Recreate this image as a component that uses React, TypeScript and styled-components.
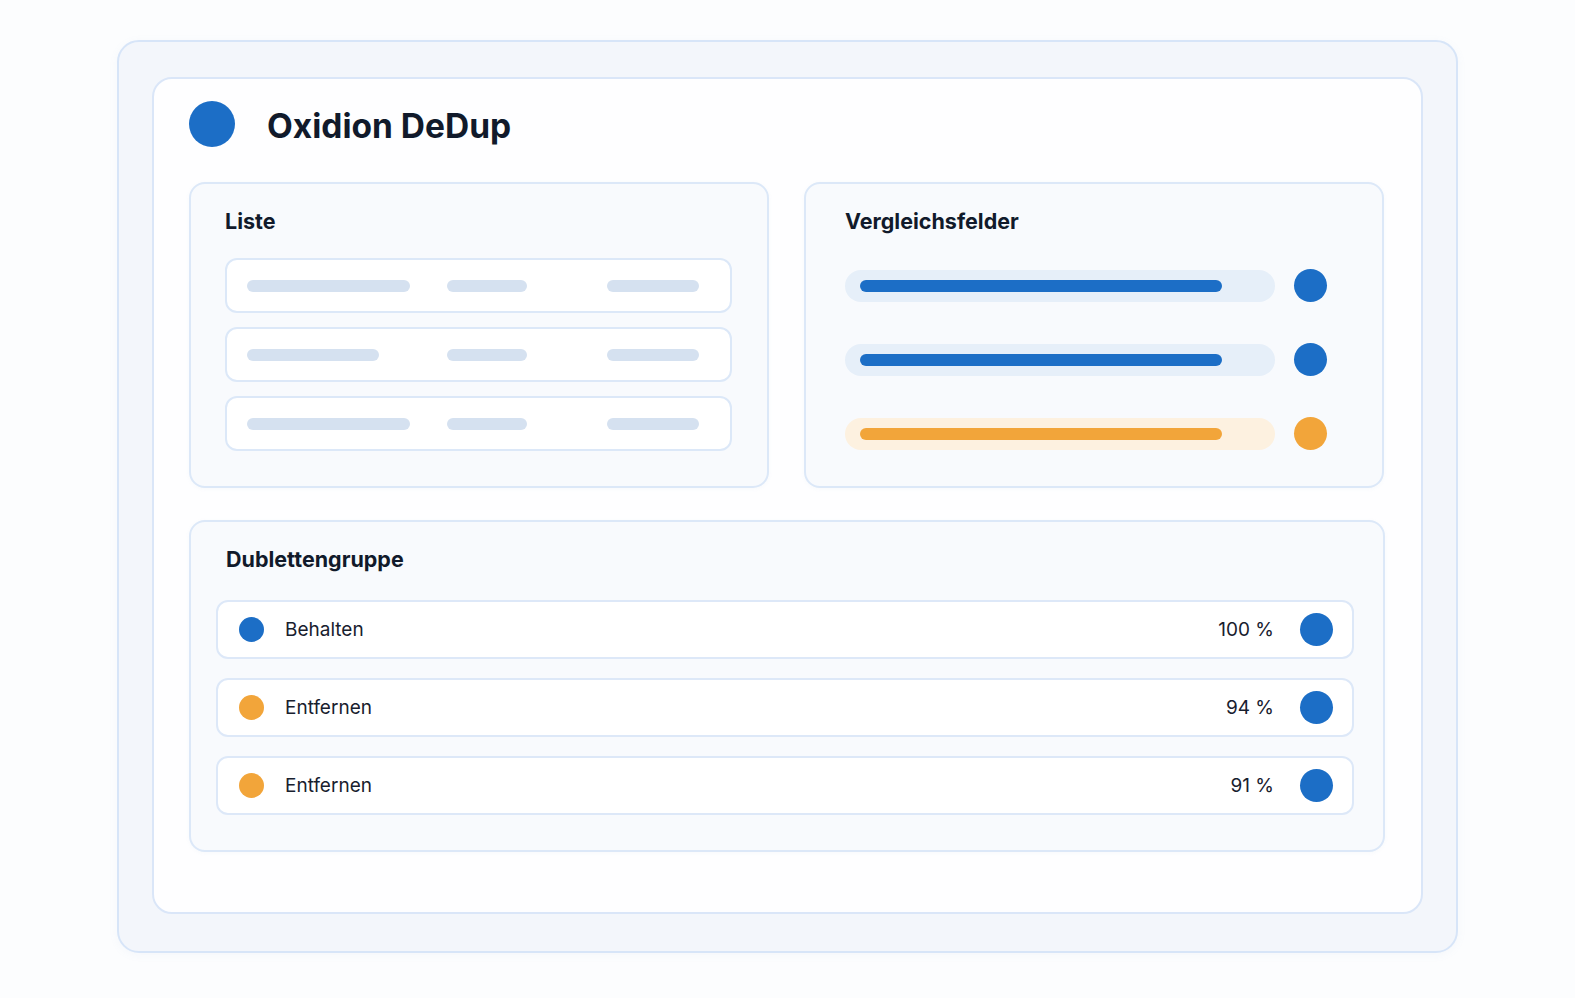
import styled, { createGlobalStyle } from "styled-components";

const BLUE = "#1c6ec6";
const ORANGE = "#f2a53a";

const GlobalStyle = createGlobalStyle`
  html, body {
    margin: 0;
    padding: 0;
    background: #fcfdfe;
    font-family: Inter, "Noto Sans", "Liberation Sans", sans-serif;
    color: #121a2a;
  }
  * {
    box-sizing: border-box;
  }
`;

const Page = styled.div`
  width: 1575px;
  height: 998px;
  padding-top: 40px;
  display: flex;
  justify-content: center;
  align-items: flex-start;
`;

const Frame = styled.div`
  width: 1341px;
  height: 913px;
  padding: 35px 33px 0 33px;
  background: #f3f6fb;
  border: 2px solid #d7e5f8;
  border-radius: 22px;
  box-shadow: 0 2px 10px rgba(120, 150, 200, 0.06);
`;

const Window = styled.div`
  width: 1271px;
  height: 837px;
  padding: 22px 36px 0 35px;
  background: #fefeff;
  border: 2px solid #dae6f8;
  border-radius: 20px;
`;

const Header = styled.div`
  display: flex;
  align-items: center;
  gap: 32px;
  height: 46px;
`;

const Dot = styled.span<{ $size: number; $color: string }>`
  display: block;
  flex: none;
  width: ${(p) => p.$size}px;
  height: ${(p) => p.$size}px;
  border-radius: 50%;
  background: ${(p) => p.$color};
`;

const Title = styled.h1`
  margin: 0;
  font-size: 33.5px;
  font-weight: 700;
  color: #111a2b;
  transform: translateY(2px);
`;

const TopGrid = styled.div`
  display: grid;
  grid-template-columns: 580px 580px;
  gap: 35px;
  margin-top: 35px;
`;

const Panel = styled.section<{ $pad: number; $height: number }>`
  height: ${(p) => p.$height}px;
  padding: 24px 0 0 ${(p) => p.$pad}px;
  background: #f8fafd;
  border: 2px solid #dce8f8;
  border-radius: 16px;
  box-shadow: 0 1px 4px rgba(120, 150, 200, 0.05);
`;

const PanelTitle = styled.h2`
  margin: 0;
  font-size: 21.5px;
  line-height: 26px;
  font-weight: 700;
  color: #111a2b;
`;

const ListRows = styled.div`
  display: flex;
  flex-direction: column;
  gap: 14px;
  margin-top: 24px;
  width: 507px;
`;

const ListRow = styled.div`
  display: grid;
  grid-template-columns: 200px 160px 92px;
  align-items: center;
  height: 55px;
  padding-left: 20px;
  background: #fff;
  border: 2px solid #dce8f8;
  border-radius: 12px;
`;

const Placeholder = styled.span<{ $w: number }>`
  display: block;
  width: ${(p) => p.$w}px;
  height: 12px;
  border-radius: 6px;
  background: #d5e1f0;
`;

const Fields = styled.div`
  display: flex;
  flex-direction: column;
  gap: 41px;
  margin-top: 35px;
`;

const FieldRow = styled.div`
  display: flex;
  align-items: center;
  gap: 19px;
`;

const Track = styled.div<{ $bg: string }>`
  width: 430px;
  height: 32px;
  display: flex;
  align-items: center;
  padding-left: 15px;
  border-radius: 16px;
  background: ${(p) => p.$bg};
`;

const Fill = styled.span<{ $color: string }>`
  display: block;
  width: 362px;
  height: 12px;
  border-radius: 6px;
  background: ${(p) => p.$color};
`;

const GroupPanel = styled.section`
  height: 332px;
  margin-top: 32px;
  padding: 24px 29px 0 25px;
  background: #f8fafd;
  border: 2px solid #dce8f8;
  border-radius: 16px;
  box-shadow: 0 1px 4px rgba(120, 150, 200, 0.05);
`;

const GroupTitle = styled(PanelTitle)`
  padding-left: 10px;
`;

const GroupRows = styled.div`
  display: flex;
  flex-direction: column;
  gap: 19px;
  margin-top: 28px;
`;

const GroupRow = styled.div`
  display: flex;
  align-items: center;
  height: 59px;
  padding: 0 19px 0 21px;
  background: #fff;
  border: 2px solid #dde8f8;
  border-radius: 12px;
`;

const Label = styled.span`
  flex: 1;
  margin-left: 21px;
  font-size: 19px;
  color: #18202e;
`;

const Percent = styled.span`
  margin-right: 26px;
  font-size: 19px;
  color: #18202e;
`;

const listRows = [163, 132, 163];

const fields = [
  { color: BLUE, bg: "#e6eff9" },
  { color: BLUE, bg: "#e6eff9" },
  { color: ORANGE, bg: "#fdf1e0" },
];

const group = [
  { label: "Behalten", color: BLUE, pct: "100 %" },
  { label: "Entfernen", color: ORANGE, pct: "94 %" },
  { label: "Entfernen", color: ORANGE, pct: "91 %" },
];

export default function App() {
  return (
    <>
      <GlobalStyle />
      <Page>
        <Frame>
          <Window>
            <Header>
              <Dot $size={46} $color={BLUE} />
              <Title>Oxidion DeDup</Title>
            </Header>

            <TopGrid>
              <Panel $pad={34} $height={306}>
                <PanelTitle>Liste</PanelTitle>
                <ListRows>
                  {listRows.map((w, i) => (
                    <ListRow key={i}>
                      <Placeholder $w={w} />
                      <Placeholder $w={80} />
                      <Placeholder $w={92} />
                    </ListRow>
                  ))}
                </ListRows>
              </Panel>

              <Panel $pad={39} $height={306}>
                <PanelTitle>Vergleichsfelder</PanelTitle>
                <Fields>
                  {fields.map((f, i) => (
                    <FieldRow key={i}>
                      <Track $bg={f.bg}>
                        <Fill $color={f.color} />
                      </Track>
                      <Dot $size={33} $color={f.color} />
                    </FieldRow>
                  ))}
                </Fields>
              </Panel>
            </TopGrid>

            <GroupPanel>
              <GroupTitle>Dublettengruppe</GroupTitle>
              <GroupRows>
                {group.map((g, i) => (
                  <GroupRow key={i}>
                    <Dot $size={25} $color={g.color} />
                    <Label>{g.label}</Label>
                    <Percent>{g.pct}</Percent>
                    <Dot $size={33} $color={BLUE} />
                  </GroupRow>
                ))}
              </GroupRows>
            </GroupPanel>
          </Window>
        </Frame>
      </Page>
    </>
  );
}
